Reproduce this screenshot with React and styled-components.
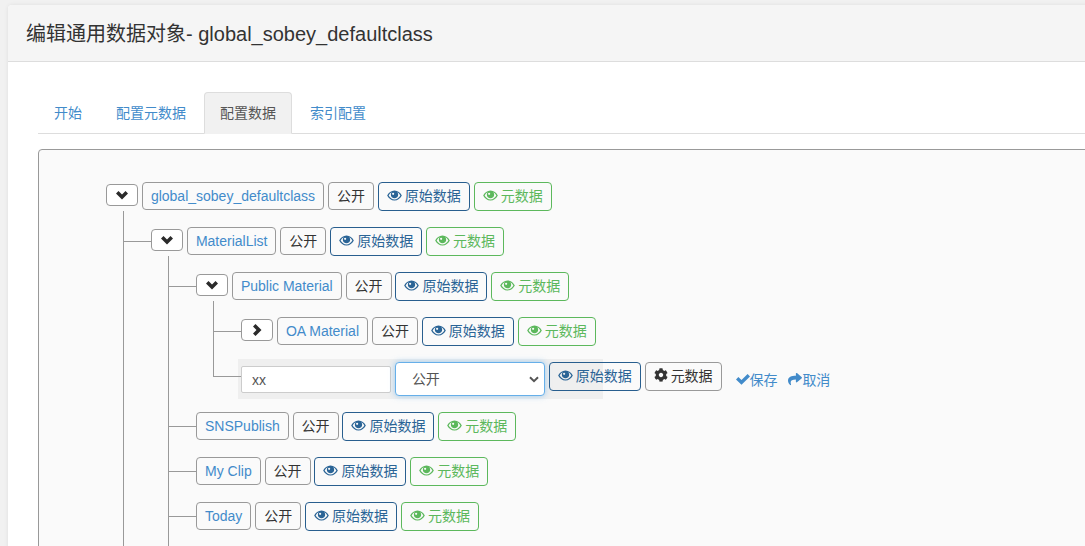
import styled, { createGlobalStyle } from "styled-components";
import { FaCog, FaShare } from "react-icons/fa";

const GlobalStyle = createGlobalStyle`
  html, body {
    margin: 0;
    height: 546px;
    overflow: hidden;
    background: #f1f1f1;
    font-family: "Liberation Sans", "Noto Sans CJK SC", sans-serif;
    font-size: 14px;
    color: #333;
  }
`;

const Page = styled.div`
  padding: 5px 0 0 8px;
  width: 1300px;
`;

const Panel = styled.section`
  background: #fff;
  border-radius: 4px 0 0 0;
  box-shadow: 0 0 4px rgba(0, 0, 0, 0.08);
`;

const PanelHeader = styled.header`
  height: 57px;
  box-sizing: border-box;
  padding: 0 0 2px 18px;
  display: flex;
  align-items: center;
  background: #f5f5f5;
  border-bottom: 1px solid #ddd;
  border-radius: 4px 0 0 0;
  font-size: 20px;
  color: #333;
`;

const PanelBody = styled.div`
  padding: 30px 0 0 30px;
`;

const Tabs = styled.nav`
  display: flex;
  gap: 2px;
  height: 42px;
  box-sizing: border-box;
  border-bottom: 1px solid #ddd;
`;

const Tab = styled.a`
  height: 42px;
  box-sizing: border-box;
  padding: 10px 15px;
  line-height: 20px;
  border: 1px solid ${(p) => (p.$active ? "#ddd" : "transparent")};
  border-bottom-color: transparent;
  border-radius: 4px 4px 0 0;
  background: ${(p) => (p.$active ? "#f1f1f1" : "transparent")};
  color: ${(p) => (p.$active ? "#555" : "#428bca")};
`;

const TreeBox = styled.div`
  margin-top: 15px;
  padding: 24px 0 0 67px;
  background: #fafafa;
  border: 1px solid #999;
  border-radius: 4px;
`;

const List = styled.ul`
  position: relative;
  list-style: none;
  margin: 0;
  padding: 0 0 ${(p) => (p.$open ? "20px" : "0")} ${(p) => (p.$nested ? "45px" : "0")};

  ${(p) =>
    p.$nested &&
    `
    &::before {
      content: "";
      position: absolute;
      left: 17px;
      top: -8px;
      bottom: ${p.$open ? "0" : "27px"};
      width: 1px;
      background: #999;
    }
  `}
`;

const Item = styled.li`
  position: relative;
  display: flow-root;

  ${(p) =>
    p.$branch &&
    `
    &::before {
      content: "";
      position: absolute;
      left: -28px;
      top: 22px;
      width: 28px;
      height: 1px;
      background: #999;
    }
  `}
`;

const Row = styled.div`
  display: flex;
  gap: 3.89px;
  height: 45px;
  box-sizing: border-box;
  padding-top: 8px;
`;

const EditRow = styled.div`
  display: flex;
  gap: 3.89px;
  width: 365px;
  height: 40px;
  box-sizing: border-box;
  margin: 5px 0 5px -3px;
  padding: 3px 0 0 3px;
  background: #efefef;
`;

const Btn = styled.button`
  display: inline-flex;
  align-items: center;
  justify-content: center;
  flex-shrink: 0;
  height: 28px;
  padding: 0 8px;
  background: transparent;
  border: 1px solid ${(p) => p.$border || "#999"};
  border-radius: 4px;
  color: ${(p) => p.$color || "#333"};
  font-family: inherit;
  font-size: 14px;
  white-space: nowrap;
`;

const PublicBtn = styled(Btn)`
  padding-bottom: 2px;
`;

const IconBtn = styled(Btn)`
  gap: 3px;
  height: 29px;
  padding-bottom: 3px;

  svg {
    flex-shrink: 0;
  }
`;

const Toggle = styled.button`
  display: inline-flex;
  align-items: center;
  justify-content: center;
  flex-shrink: 0;
  width: 32px;
  height: 22px;
  margin-top: 2px;
  padding: 0;
  background: #fff;
  border: 1px solid #999;
  border-radius: 4px;
  color: #2b2b2b;
`;

const NameInput = styled.input`
  flex-shrink: 0;
  width: 150px;
  height: 27px;
  box-sizing: border-box;
  margin-top: 4px;
  padding: 0 10px;
  background: #fff;
  border: 1px solid #ccc;
  border-radius: 2px;
  color: #555;
  font-family: inherit;
  font-size: 14px;
`;

const Select = styled.select`
  flex-shrink: 0;
  width: 150px;
  height: 34px;
  box-sizing: border-box;
  padding: 0 12px 0 16px;
  appearance: none;
  background: #fff url("data:image/svg+xml,%3Csvg xmlns='http://www.w3.org/2000/svg' width='10' height='7'%3E%3Cpath d='M1 1.2l4 4 4-4' fill='none' stroke='%23555' stroke-width='2'/%3E%3C/svg%3E")
    no-repeat right 5px center;
  border: 1px solid #66afe9;
  border-radius: 4px;
  box-shadow: 0 0 6px rgba(102, 175, 233, 0.6);
  color: #555;
  font-family: inherit;
  font-size: 14px;
`;

const ActionLink = styled.a`
  display: inline-flex;
  align-items: center;
  flex-shrink: 0;
  height: 20px;
  margin: 7px 0 0 ${(p) => p.$offset};
  color: #428bca;
  white-space: nowrap;

  svg {
    flex-shrink: 0;
  }
`;

const EyeIcon = () => (
  <svg width="15" height="11" viewBox="0 0 16 12" fill="currentColor">
    <path
      fillRule="evenodd"
      d="M8 .5C4.5.5 1.5 3 0 6c1.5 3 4.5 5.5 8 5.5s6.5-2.5 8-5.5C14.5 3 11.5.5 8 .5zM8 10.3c-2.7 0-5-1.9-6.4-4.3C2.5 4.4 3.6 3.2 5 2.5 4.4 3.2 4 4.1 4 5.2 4 7.4 5.8 9.1 8 9.1s4-1.7 4-3.9c0-1.1-.4-2-1-2.7 1.4.7 2.5 1.9 3.4 3.5-1.4 2.4-3.7 4.3-6.4 4.3zM6.5 3a1.2 1.2 0 1 0 0 2.4 1.2 1.2 0 0 0 0-2.4z"
    />
  </svg>
);

const ChevronDown = () => (
  <svg width="12" height="9" viewBox="0 0 12 9" fill="currentColor">
    <polygon points="0,2.5 2.5,0 6,3.5 9.5,0 12,2.5 6,8.5" />
  </svg>
);

const ChevronRight = () => (
  <svg width="9" height="12" viewBox="0 0 9 12" fill="currentColor">
    <polygon points="2.5,0 8.5,6 2.5,12 0,9.5 3.5,6 0,2.5" />
  </svg>
);

const CheckIcon = () => (
  <svg width="14" height="12" viewBox="0 0 14 12" fill="currentColor">
    <polygon points="0,6.5 2.4,4 5.5,7 11.6,1 14,3.4 5.5,11.8" />
  </svg>
);

const RAW = { border: "#285e8e", color: "#2a6496" };
const META = { border: "#5cb85c", color: "#5cb85c" };

const Node = ({ name, toggle }) => (
  <Row>
    {toggle && <Toggle>{toggle === "down" ? <ChevronDown /> : <ChevronRight />}</Toggle>}
    <Btn $color="#428bca">{name}</Btn>
    <PublicBtn>公开</PublicBtn>
    <IconBtn $border={RAW.border} $color={RAW.color}>
      <EyeIcon />
      原始数据
    </IconBtn>
    <IconBtn $border={META.border} $color={META.color}>
      <EyeIcon />
      元数据
    </IconBtn>
  </Row>
);

export default function App() {
  return (
    <>
      <GlobalStyle />
      <Page>
        <Panel>
          <PanelHeader>编辑通用数据对象- global_sobey_defaultclass</PanelHeader>
          <PanelBody>
            <Tabs>
              <Tab>开始</Tab>
              <Tab>配置元数据</Tab>
              <Tab $active>配置数据</Tab>
              <Tab>索引配置</Tab>
            </Tabs>
            <TreeBox>
              <List>
                <Item>
                  <Node name="global_sobey_defaultclass" toggle="down" />
                  <List $nested $open>
                    <Item $branch>
                      <Node name="MaterialList" toggle="down" />
                      <List $nested $open>
                        <Item $branch>
                          <Node name="Public Material" toggle="down" />
                          <List $nested>
                            <Item $branch>
                              <Node name="OA Material" toggle="right" />
                            </Item>
                            <Item $branch>
                              <EditRow>
                                <NameInput defaultValue="xx" />
                                <Select defaultValue="public">
                                  <option value="public">公开</option>
                                </Select>
                                <IconBtn $border={RAW.border} $color={RAW.color}>
                                  <EyeIcon />
                                  原始数据
                                </IconBtn>
                                <IconBtn>
                                  <FaCog size={14} />
                                  元数据
                                </IconBtn>
                                <ActionLink $offset="10px">
                                  <CheckIcon />
                                  保存
                                </ActionLink>
                                <ActionLink $offset="7px">
                                  <FaShare size={14} />
                                  取消
                                </ActionLink>
                              </EditRow>
                            </Item>
                          </List>
                        </Item>
                        <Item $branch>
                          <Node name="SNSPublish" />
                        </Item>
                        <Item $branch>
                          <Node name="My Clip" />
                        </Item>
                        <Item $branch>
                          <Node name="Today" />
                        </Item>
                      </List>
                    </Item>
                  </List>
                </Item>
              </List>
            </TreeBox>
          </PanelBody>
        </Panel>
      </Page>
    </>
  );
}
